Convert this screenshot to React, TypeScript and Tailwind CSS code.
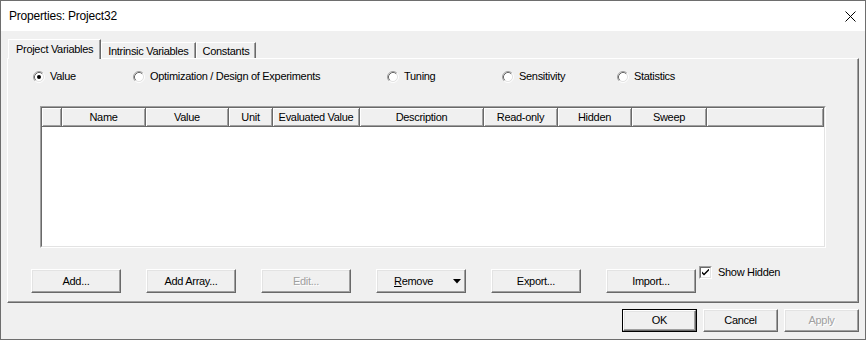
const ui = "font-['Liberation_Sans',Arial,sans-serif] text-[11px] leading-[13px] tracking-[-0.3px] text-black";

const raised =
  "border-t border-l border-t-white border-l-white border-b border-r border-b-[#696969] border-r-[#696969] shadow-[inset_-1px_-1px_0_#a0a0a0,inset_1px_1px_0_#e3e3e3]";

function Radio({ checked }: { checked?: boolean }) {
  return (
    <svg width="12" height="12" viewBox="0 0 12 12" className="shrink-0">
      <circle cx="6" cy="6" r="4.2" fill="#fff" />
      <path d="M2.11 9.89A5.5 5.5 0 0 1 9.89 2.11" stroke="#a0a0a0" fill="none" />
      <path d="M9.89 2.11A5.5 5.5 0 0 1 2.11 9.89" stroke="#fff" fill="none" />
      <path d="M2.82 9.18A4.5 4.5 0 0 1 9.18 2.82" stroke="#696969" fill="none" />
      <path d="M9.18 2.82A4.5 4.5 0 0 1 2.82 9.18" stroke="#e3e3e3" fill="none" />
      {checked && <circle cx="6" cy="6" r="2" fill="#000" />}
    </svg>
  );
}

function RadioItem({ label, checked, w }: { label: string; checked?: boolean; w: string }) {
  return (
    <div className={`flex items-center gap-[5px] ${w}`}>
      <Radio checked={checked} />
      <span>{label}</span>
    </div>
  );
}

function Button({
  children,
  w = "w-[90px]",
  h = "h-[24px]",
  disabled,
}: {
  children: React.ReactNode;
  w?: string;
  h?: string;
  disabled?: boolean;
}) {
  return (
    <div
      className={`${w} ${h} ${raised} bg-[#f0f0f0] flex items-center justify-center shrink-0 ${
        disabled ? "text-[#a0a0a0] [text-shadow:1px_1px_0_#fff]" : ""
      }`}
    >
      {children}
    </div>
  );
}

function Tab({ label, active }: { label: string; active?: boolean }) {
  return (
    <div
      className={`flex items-center border-t border-l border-t-white border-l-white border-r border-r-[#696969] shadow-[inset_-1px_0_0_#a0a0a0] ${
        active ? "h-[20px] -mb-px z-10 bg-[#f0f0f0] px-[7px] -ml-px pb-[1px]" : "h-[16px] px-[6px] pt-[1px]"
      }`}
    >
      <span>{label}</span>
    </div>
  );
}

const columns: [string, string][] = [
  ["", "w-[20px]"],
  ["Name", "w-[84px]"],
  ["Value", "w-[83px]"],
  ["Unit", "w-[44px]"],
  ["Evaluated Value", "w-[87px]"],
  ["Description", "w-[124px]"],
  ["Read-only", "w-[74px]"],
  ["Hidden", "w-[74px]"],
  ["Sweep", "w-[75px]"],
  ["", "flex-1"],
];

function VariablesTable() {
  return (
    <div className="ml-[32px] w-[786px] h-[142px] border-t border-l border-t-[#a0a0a0] border-l-[#a0a0a0] border-b border-r border-b-white border-r-white">
      <div className="size-full bg-white border-t border-l border-t-[#696969] border-l-[#696969] border-b border-r border-b-[#e3e3e3] border-r-[#e3e3e3] flex flex-col">
        <div className="flex h-[19px] shrink-0">
          {columns.map(([label, w], i) => (
            <div
              key={i}
              className={`${w} h-full bg-[#f0f0f0] border-r border-b border-[#696969] shadow-[inset_1px_1px_0_#fff,inset_-1px_-1px_0_#a0a0a0] flex items-center justify-center`}
            >
              {label}
            </div>
          ))}
        </div>
      </div>
    </div>
  );
}

export default function App() {
  return (
    <div className={`${ui} w-[866px] h-[340px] border border-[#6e6e6e] flex flex-col bg-[#f0f0f0]`}>
      <div className="h-[30px] bg-white flex items-center justify-between pl-[8px] pr-[9px] shrink-0">
        <span className="text-[12px] tracking-[-0.2px] mt-[1px]">Properties: Project32</span>
        <svg width="11" height="11" viewBox="0 0 11 11">
          <path d="M0.5 0.5L10.5 10.5M10.5 0.5L0.5 10.5" stroke="#000" strokeWidth="1" />
        </svg>
      </div>

      <div className="flex flex-col flex-1 pt-[8px]">
        <div className="flex items-end h-[19px] ml-[8px]">
          <Tab label="Project Variables" active />
          <Tab label="Intrinsic Variables" />
          <Tab label="Constants" />
        </div>

        <div className="ml-[6px] w-[852px] h-[245px] border-t border-l border-t-white border-l-white border-b border-r border-b-[#696969] border-r-[#696969] shadow-[inset_-1px_-1px_0_#a0a0a0] flex flex-col">
          <div className="flex items-center mt-[11px] pl-[25px] h-[13px]">
            <RadioItem label="Value" checked w="w-[100px]" />
            <RadioItem label="Optimization / Design of Experiments" w="w-[254px]" />
            <RadioItem label="Tuning" w="w-[115px]" />
            <RadioItem label="Sensitivity" w="w-[115px]" />
            <RadioItem label="Statistics" w="w-[100px]" />
          </div>

          <div className="mt-[23px]">
            <VariablesTable />
          </div>

          <div className="flex items-start mt-[21px] ml-[23px] gap-[25px]">
            <Button>Add...</Button>
            <Button>Add Array...</Button>
            <Button disabled>Edit...</Button>
            <Button>
              <div className="flex items-center w-full pl-[17px]">
                <span>
                  <span className="underline">R</span>emove
                </span>
                <svg width="8" height="5" viewBox="0 0 8 5" className="ml-[20px]">
                  <path d="M0 0H8L4 4.5Z" fill="#000" />
                </svg>
              </div>
            </Button>
            <Button>Export...</Button>
            <div className="flex items-start">
              <Button>Import...</Button>
              <div className="flex items-center gap-[6px] ml-[3px] -mt-[3px]">
                <div className="w-[13px] h-[13px] border-t border-l border-t-[#a0a0a0] border-l-[#a0a0a0] border-b border-r border-b-white border-r-white">
                  <div className="size-full bg-white border-t border-l border-t-[#696969] border-l-[#696969] border-b border-r border-b-[#e3e3e3] border-r-[#e3e3e3] flex items-center justify-center">
                    <svg width="7" height="7" viewBox="0 0 7 7">
                      <path d="M0 2.5L0 4.5L2 6.5L7 1.5L7 -0.5L2 4.5Z" fill="#000" />
                    </svg>
                  </div>
                </div>
                <span>Show Hidden</span>
              </div>
            </div>
          </div>
        </div>

        <div className="flex justify-end gap-[6px] pr-[6px] mt-[6px]">
          <div className="border border-[#000]">
            <Button w="w-[73px]" h="h-[21px]">OK</Button>
          </div>
          <Button w="w-[75px]" h="h-[23px]">Cancel</Button>
          <Button w="w-[75px]" h="h-[23px]" disabled>Apply</Button>
        </div>
      </div>
    </div>
  );
}
